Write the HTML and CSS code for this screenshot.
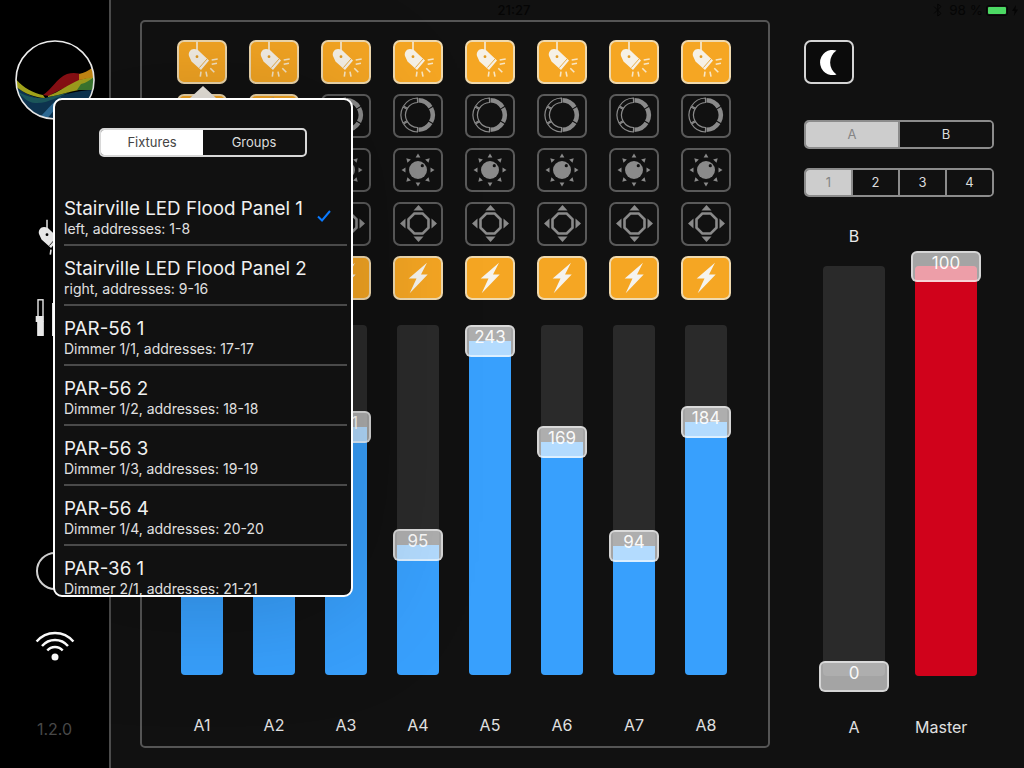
FILE: index.html
```html
<!DOCTYPE html>
<html lang="en">
<head>
<meta charset="utf-8">
<title>Light console</title>
<link rel="stylesheet" href="styles.css">
</head>
<body>
<svg class="defs" width="0" height="0" aria-hidden="true">
  <symbol id="spot" viewBox="0 0 50 44">
    <path class="spot-stem" d="M20 1.7V13"/>
    <path class="spot-head" d="M17 9C13.5 9 11 12.5 12 16L14.5 21.5L24 30L32 20.5L23 12C21.5 10 19.5 9 17 9Z"/>
    <path class="spot-lens" d="M22.4 27.6L30 19"/>
    <circle class="spot-dot" cx="20" cy="16.7" r="1.4"/>
    <path class="spot-rays" d="M34.7 20L40.7 19M34.7 24.3L40 23.3M33.3 28.3L37.3 32.3M29 31.7L30 36.7M24 31.7L23.3 36.7"/>
  </symbol>
  <symbol id="ring" viewBox="0 0 50 44">
    <g transform="translate(25 21)">
      <path class="seg-on" d="M.59-16.99A17 17 0 0 1 14.42-9.01L10.6-6.62A12.5 12.5 0 0 0 .44-12.49Z"/>
      <path class="seg-on" transform="rotate(60)" d="M.59-16.99A17 17 0 0 1 14.42-9.01L10.6-6.62A12.5 12.5 0 0 0 .44-12.49Z"/>
      <path class="seg-on" transform="rotate(120)" d="M.59-16.99A17 17 0 0 1 14.42-9.01L10.6-6.62A12.5 12.5 0 0 0 .44-12.49Z"/>
      <path class="seg-off" transform="rotate(180)" d="M.59-16.99A17 17 0 0 1 14.42-9.01L10.6-6.62A12.5 12.5 0 0 0 .44-12.49Z"/>
      <path class="seg-off" transform="rotate(240)" d="M.59-16.99A17 17 0 0 1 14.42-9.01L10.6-6.62A12.5 12.5 0 0 0 .44-12.49Z"/>
      <path class="seg-off" transform="rotate(300)" d="M.59-16.99A17 17 0 0 1 14.42-9.01L10.6-6.62A12.5 12.5 0 0 0 .44-12.49Z"/>
    </g>
  </symbol>
  <symbol id="sun" viewBox="0 0 50 44">
    <g class="glyph" transform="translate(25 22)">
      <circle r="9"/>
      <polygon points="0,-16.5 2.4,-12.5 -2.4,-12.5"/>
      <polygon transform="rotate(45)" points="0,-16.5 2.4,-12.5 -2.4,-12.5"/>
      <polygon transform="rotate(90)" points="0,-16.5 2.4,-12.5 -2.4,-12.5"/>
      <polygon transform="rotate(135)" points="0,-16.5 2.4,-12.5 -2.4,-12.5"/>
      <polygon transform="rotate(180)" points="0,-16.5 2.4,-12.5 -2.4,-12.5"/>
      <polygon transform="rotate(225)" points="0,-16.5 2.4,-12.5 -2.4,-12.5"/>
      <polygon transform="rotate(270)" points="0,-16.5 2.4,-12.5 -2.4,-12.5"/>
      <polygon transform="rotate(315)" points="0,-16.5 2.4,-12.5 -2.4,-12.5"/>
      <circle class="sun-dot" cx="4.3" cy="-4.3" r="1.6"/>
    </g>
  </symbol>
  <symbol id="move" viewBox="0 0 50 44">
    <g class="glyph" transform="translate(25.5 21.5)">
      <polygon class="octagon" points="-4.2,-10 4.2,-10 10,-4.2 10,4.2 4.2,10 -4.2,10 -10,4.2 -10,-4.2"/>
      <polygon points="0,-18.5 5,-13 -5,-13"/>
      <polygon transform="rotate(90)" points="0,-18.5 5,-13 -5,-13"/>
      <polygon transform="rotate(180)" points="0,-18.5 5,-13 -5,-13"/>
      <polygon transform="rotate(270)" points="0,-18.5 5,-13 -5,-13"/>
    </g>
  </symbol>
  <symbol id="bolt" viewBox="0 0 50 44">
    <polygon class="bolt-shape" points="34,6.7 15.7,22.5 23.5,22.5 16.7,37.3 34.7,18.5 28,18.5"/>
  </symbol>
</svg>

<div class="app">
  <aside class="sidebar">
    <svg class="logo" viewBox="0 0 80 80" width="80" height="80">
      <defs><clipPath id="logo-clip"><circle cx="40" cy="40" r="39"/></clipPath></defs>
      <g clip-path="url(#logo-clip)">
        <rect width="80" height="80" fill="#000"/>
        <path fill="#0e3653" d="M0 46C12 56 24 59 32 58C48 56 62 50 80 50V80H0Z"/>
        <path fill="#1d5a5e" d="M2 51C8 58 14 63 20 63C32 64 44 56 56 52L30 58C20 59 10 56 2 51Z"/>
        <path fill="#8b0f14" d="M28 55C36 50 42 38 52 34C58 32 64 33 68 35L66 44C54 45 44 50 34 56Z"/>
        <path fill="#a6a81c" d="M0 38C8 48 18 53 28 55L30 58C20 58 8 53 0 46Z"/>
        <path fill="#a3a31e" d="M33 56C44 52 54 44 64 40L79 36L80 48C64 48 48 55 33 57Z"/>
        <path fill="#c78a14" d="M64 34C69 33 73 31 77 28L79 37L64 40Z"/>
        <path fill="#3c7a30" d="M66 44C71 43 75 40 79 37L80 50L62 50Z"/>
        <path fill="#2f6f9c" d="M22 80C34 68 40 60 46 57C42 66 36 76 30 80Z"/>
      </g>
      <circle class="logo-ring" cx="40" cy="40" r="39"/>
    </svg>
    <svg class="side-spot" width="50" height="44"><use href="#spot"/></svg>
    <svg class="side-sliders" viewBox="0 0 30 37" width="30" height="37">
      <rect class="slider-track" x="6" y=".8" width="5" height="35.4"/>
      <rect class="slider-fill" x="5.5" y="22" width="6" height="15"/>
      <rect class="slider-fill" x="3.7" y="17" width="7.8" height="6"/>
      <rect class="slider-fill" x="20" y="4" width="5" height="33"/>
    </svg>
    <div class="side-circle"></div>
    <svg class="side-wifi" viewBox="0 0 40 30" width="40" height="30">
      <path class="wifi-arc" d="M1.6 10.6A24 24 0 0 1 38.4 10.6M7 15.1A17 17 0 0 1 33 15.1M12.3 19.6A10 10 0 0 1 27.7 19.6"/>
      <circle class="wifi-dot" cx="20" cy="26" r="3.5"/>
    </svg>
    <div class="version">1.2.0</div>
  </aside>

  <main class="main">
    <section class="panel">
      <div class="channel">
        <button class="btn on"><svg><use href="#spot"/></svg></button>
        <button class="btn on"><svg><use href="#ring"/></svg></button>
        <button class="btn"><svg><use href="#sun"/></svg></button>
        <button class="btn"><svg><use href="#move"/></svg></button>
        <button class="btn on"><svg><use href="#bolt"/></svg></button>
        <div class="track"><div class="fill" style="height:243px"><div class="thumb">177</div></div></div>
        <div class="ch-label">A1</div>
      </div>
      <div class="channel">
        <button class="btn on"><svg><use href="#spot"/></svg></button>
        <button class="btn on"><svg><use href="#ring"/></svg></button>
        <button class="btn"><svg><use href="#sun"/></svg></button>
        <button class="btn"><svg><use href="#move"/></svg></button>
        <button class="btn on"><svg><use href="#bolt"/></svg></button>
        <div class="track"><div class="fill" style="height:275px"><div class="thumb">200</div></div></div>
        <div class="ch-label">A2</div>
      </div>
      <div class="channel">
        <button class="btn on"><svg><use href="#spot"/></svg></button>
        <button class="btn"><svg><use href="#ring"/></svg></button>
        <button class="btn"><svg><use href="#sun"/></svg></button>
        <button class="btn"><svg><use href="#move"/></svg></button>
        <button class="btn on"><svg><use href="#bolt"/></svg></button>
        <div class="track"><div class="fill" style="height:248px"><div class="thumb">181</div></div></div>
        <div class="ch-label">A3</div>
      </div>
      <div class="channel">
        <button class="btn on"><svg><use href="#spot"/></svg></button>
        <button class="btn"><svg><use href="#ring"/></svg></button>
        <button class="btn"><svg><use href="#sun"/></svg></button>
        <button class="btn"><svg><use href="#move"/></svg></button>
        <button class="btn on"><svg><use href="#bolt"/></svg></button>
        <div class="track"><div class="fill" style="height:130px"><div class="thumb">95</div></div></div>
        <div class="ch-label">A4</div>
      </div>
      <div class="channel">
        <button class="btn on"><svg><use href="#spot"/></svg></button>
        <button class="btn"><svg><use href="#ring"/></svg></button>
        <button class="btn"><svg><use href="#sun"/></svg></button>
        <button class="btn"><svg><use href="#move"/></svg></button>
        <button class="btn on"><svg><use href="#bolt"/></svg></button>
        <div class="track"><div class="fill" style="height:334px"><div class="thumb">243</div></div></div>
        <div class="ch-label">A5</div>
      </div>
      <div class="channel">
        <button class="btn on"><svg><use href="#spot"/></svg></button>
        <button class="btn"><svg><use href="#ring"/></svg></button>
        <button class="btn"><svg><use href="#sun"/></svg></button>
        <button class="btn"><svg><use href="#move"/></svg></button>
        <button class="btn on"><svg><use href="#bolt"/></svg></button>
        <div class="track"><div class="fill" style="height:233px"><div class="thumb">169</div></div></div>
        <div class="ch-label">A6</div>
      </div>
      <div class="channel">
        <button class="btn on"><svg><use href="#spot"/></svg></button>
        <button class="btn"><svg><use href="#ring"/></svg></button>
        <button class="btn"><svg><use href="#sun"/></svg></button>
        <button class="btn"><svg><use href="#move"/></svg></button>
        <button class="btn on"><svg><use href="#bolt"/></svg></button>
        <div class="track"><div class="fill" style="height:129px"><div class="thumb">94</div></div></div>
        <div class="ch-label">A7</div>
      </div>
      <div class="channel">
        <button class="btn on"><svg><use href="#spot"/></svg></button>
        <button class="btn"><svg><use href="#ring"/></svg></button>
        <button class="btn"><svg><use href="#sun"/></svg></button>
        <button class="btn"><svg><use href="#move"/></svg></button>
        <button class="btn on"><svg><use href="#bolt"/></svg></button>
        <div class="track"><div class="fill" style="height:253px"><div class="thumb">184</div></div></div>
        <div class="ch-label">A8</div>
      </div>
    </section>

    <section class="controls">
      <button class="moon-btn">
        <svg viewBox="0 0 50 44" width="50" height="44"><path class="moon" d="M32.5 10.5A12.6 12.6 0 1 0 32.5 34.5A14.5 14.5 0 0 1 32.5 10.5Z"/></svg>
      </button>
      <div class="seg seg-ab">
        <div class="seg-item selected">A</div>
        <div class="seg-item">B</div>
      </div>
      <div class="seg seg-num">
        <div class="seg-item selected">1</div>
        <div class="seg-item">2</div>
        <div class="seg-item">3</div>
        <div class="seg-item">4</div>
      </div>
      <div class="crossfade">
        <div class="cf-col">
          <div class="cf-top">B</div>
          <div class="track track-wide"><div class="fill" style="height:0"><div class="thumb thumb-wide">0</div></div></div>
          <div class="cf-bottom">A</div>
        </div>
        <div class="cf-col">
          <div class="cf-top"></div>
          <div class="track track-wide"><div class="fill fill-red" style="height:410px"><div class="thumb thumb-wide">100</div></div></div>
          <div class="cf-bottom cf-master">Master</div>
        </div>
      </div>
    </section>
  </main>

  <div class="statusbar">
    <div class="clock">21:27</div>
    <div class="status-right">
      <svg class="bt" viewBox="0 0 10 14" width="10" height="14"><path d="M1 3.5L8 10.5L4.8 13V1L8 3.5L1 10.5"/></svg>
      <span>98 %</span>
      <div class="battery"><div class="battery-level"></div></div>
      <svg class="charge" viewBox="0 0 6 11" width="6" height="11"><polygon points="4,0 0,6 2.6,6 1.8,11 6,4.6 3.4,4.6"/></svg>
    </div>
  </div>

  <div class="pop-arrow"></div>
  <div class="popover">
    <div class="pop-seg">
      <div class="pop-seg-item selected">Fixtures</div>
      <div class="pop-seg-item">Groups</div>
    </div>
    <ul class="list">
      <li class="row">
        <div class="row-text"><div class="row-title">Stairville LED Flood Panel 1</div><div class="row-sub">left, addresses: 1-8</div></div>
        <svg class="check" viewBox="0 0 14 12" width="14" height="12"><path d="M1 6.5L5 10.5L13 1"/></svg>
      </li>
      <li class="row"><div class="row-text"><div class="row-title">Stairville LED Flood Panel 2</div><div class="row-sub">right, addresses: 9-16</div></div></li>
      <li class="row"><div class="row-text"><div class="row-title">PAR-56 1</div><div class="row-sub">Dimmer 1/1, addresses: 17-17</div></div></li>
      <li class="row"><div class="row-text"><div class="row-title">PAR-56 2</div><div class="row-sub">Dimmer 1/2, addresses: 18-18</div></div></li>
      <li class="row"><div class="row-text"><div class="row-title">PAR-56 3</div><div class="row-sub">Dimmer 1/3, addresses: 19-19</div></div></li>
      <li class="row"><div class="row-text"><div class="row-title">PAR-56 4</div><div class="row-sub">Dimmer 1/4, addresses: 20-20</div></div></li>
      <li class="row"><div class="row-text"><div class="row-title">PAR-36 1</div><div class="row-sub">Dimmer 2/1, addresses: 21-21</div></div></li>
    </ul>
  </div>
</div>
</body>
</html>
```
FILE: styles.css
```css
* { box-sizing: border-box; }
html, body { margin: 0; padding: 0; background: #111; }
body { font-family: Inter, "Liberation Sans", sans-serif; color: #e4e4e4; overflow: hidden; }
.defs { position: absolute; }

.app { position: relative; display: flex; width: 1024px; height: 768px; background: #111; overflow: hidden; }

/* sidebar */
.sidebar { width: 111px; height: 768px; flex: none; background: #000; border-right: 2px solid #4c4c4c; display: flex; flex-direction: column; align-items: center; padding-top: 40px; }
.logo { flex: none; margin-left: 1px; }
.logo-ring { fill: none; stroke: #f2f2f2; stroke-width: 1.6; }
.side-spot { flex: none; margin-top: 98px; margin-right: 6px; --head: #fff; --dot: #000; --rays: #fff; --lens: #000; }
.side-sliders { flex: none; margin-top: 37px; margin-right: 15px; }
.slider-track { fill: none; stroke: #fff; stroke-width: 1.4; }
.slider-fill { fill: #fff; }
.side-circle { flex: none; width: 38px; height: 38px; margin-top: 216px; border: 2px solid #ddd; border-radius: 50%; }
.side-wifi { flex: none; margin-top: 41px; }
.wifi-arc { fill: none; stroke: #fff; stroke-width: 2.4; }
.wifi-dot { fill: #fff; }
.version { margin-top: 58px; font-size: 16px; line-height: 20px; color: #484848; }

/* main */
.main { flex: 1; display: flex; align-items: flex-start; padding: 20px 0 0 29px; }
.panel { flex: none; width: 630px; height: 728px; border: 2px solid #555; border-radius: 5px; padding: 18px 0 0 24px; display: grid; grid-template-columns: repeat(8, 72px); }
.channel { display: flex; flex-direction: column; align-items: center; gap: 10px; width: 72px; }

.btn { display: block; width: 50px; height: 44px; padding: 0; background: transparent; border: 2px solid #5a5a5a; border-radius: 7px; position: relative; --head: #8a8a8a; --rays: #8a8a8a; --dot: #111; --lens: #111; }
.btn svg { position: absolute; left: -2px; top: -2px; width: 50px; height: 44px; }
.btn.on { background: #f5a623; border-color: #efd9ae; --head: #f6f1e6; --rays: #f8e6c4; --dot: #e39b20; --lens: #e39b20; }

.spot-stem { stroke: var(--head); stroke-width: 1.5; fill: none; }
.spot-head { fill: var(--head); }
.spot-lens { stroke: var(--lens); stroke-width: .8; fill: none; }
.spot-dot { fill: var(--dot); }
.spot-rays { stroke: var(--rays); stroke-width: 1.6; fill: none; }
.seg-on { fill: #8a8a8a; }
.seg-off { fill: none; stroke: #8a8a8a; stroke-width: 1.2; }
.btn.on .seg-on { fill: #f6f1e6; }
.btn.on .seg-off { stroke: #f6f1e6; }
.glyph { fill: #8a8a8a; }
.sun-dot { fill: #111; }
.octagon { fill: none; stroke: #8a8a8a; stroke-width: 2.6; }
.bolt-shape { fill: #f5f3ee; }

.track { width: 42px; height: 350px; margin-top: 15px; background: #2a2a2a; border-radius: 4px; display: flex; flex-direction: column; justify-content: flex-end; }
.fill { position: relative; width: 100%; background: #38a0fd; border-radius: 0 0 4px 4px; }
.fill-red { background: #d0021b; border-radius: 4px; }
.thumb { position: absolute; left: -4px; top: -16px; width: 50px; height: 32px; border: 2px solid rgba(255,255,255,.55); border-radius: 6px; background: rgba(255,255,255,.62); color: rgba(255,255,255,.95); font-size: 17px; line-height: 20px; text-align: center; }
.ch-label { margin-top: 30px; font-size: 16px; line-height: 20px; text-align: center; color: #e0e0e0; }

/* right controls */
.controls { flex: none; width: 190px; margin-left: 34px; padding-top: 20px; display: flex; flex-direction: column; }
.moon-btn { display: block; width: 50px; height: 44px; padding: 0; position: relative; background: #0b0b0b; border: 2px solid #d4d4d4; border-radius: 7px; }
.moon-btn svg { position: absolute; left: -2px; top: -2px; }
.moon { fill: #fff; }
.seg { display: flex; height: 29px; border: 2px solid #8c8c8c; border-radius: 5px; overflow: hidden; }
.seg-ab { margin-top: 36px; }
.seg-num { margin-top: 19px; }
.seg-item { flex: 1; font-size: 13px; line-height: 25px; text-align: center; color: #dcdcdc; background: #111; border-left: 2px solid #8c8c8c; }
.seg-item:first-child { border-left: 0; }
.seg-item.selected { background: #cdcdcd; color: #858585; }

.crossfade { display: flex; gap: 30px; padding-left: 19px; margin-top: 29px; }
.cf-col { width: 62px; display: flex; flex-direction: column; }
.cf-top { height: 20px; font-size: 16px; line-height: 20px; text-align: center; color: #e8e8e8; }
.track-wide { width: 62px; height: 410px; margin-top: 20px; }
.thumb-wide { left: -4px; top: -15px; width: 70px; height: 31px; }
.cf-bottom { margin-top: 41px; height: 20px; font-size: 16px; line-height: 20px; text-align: center; color: #e0e0e0; white-space: nowrap; }
.cf-master { text-align: left; }

/* status bar */
.statusbar { position: absolute; left: 0; top: 0; width: 1024px; height: 20px; color: #050505; font-size: 13.5px; line-height: 20px; }
.clock { text-align: center; font-weight: 500; font-size: 13px; padding-left: 4px; }
.status-right { position: absolute; right: 6px; top: 0; display: flex; align-items: center; height: 20px; gap: 3px; }
.bt { fill: none; stroke: #050505; stroke-width: 1; margin-right: 3px; }
.battery { width: 22px; height: 11px; padding: 1px; border: 1px solid #050505; border-radius: 3px; }
.battery-level { width: 100%; height: 100%; background: #4cd964; border-radius: 1px; }
.charge { fill: #050505; margin-left: 1px; }

/* popover */
.pop-arrow { position: absolute; left: 190px; top: 86px; width: 0; height: 0; border-left: 13px solid transparent; border-right: 13px solid transparent; border-bottom: 12px solid #f0ebe3; }
.popover { position: absolute; left: 53px; top: 98px; width: 300px; height: 499px; background: #111; border: 2px solid #fff; border-radius: 9px; overflow: hidden; box-shadow: 0 0 130px rgba(0,0,0,.22); padding-top: 28px; }
.pop-seg { display: flex; width: 208px; height: 29px; margin: 0 0 0 44px; border: 2px solid #d8d8d8; border-radius: 5px; overflow: hidden; }
.pop-seg-item { flex: 1; font-size: 13px; line-height: 25px; text-align: center; color: #dcdcdc; }
.pop-seg-item.selected { background: #fff; color: #444; }
.list { list-style: none; margin: 29px 0 0; padding: 0 4px 0 9px; }
.row { height: 60px; display: flex; align-items: flex-start; border-bottom: 2px solid #4a4a4a; }
.row-text { flex: 1; padding-top: 12px; }
.row-title { font-size: 18.8px; line-height: 22px; color: #f0f0f0; white-space: nowrap; }
.row-sub { font-size: 14px; line-height: 18px; color: #e0e0e0; white-space: nowrap; }
.check { flex: none; margin: 24px 16px 0 0; fill: none; stroke: #0a7aff; stroke-width: 2; }
```
